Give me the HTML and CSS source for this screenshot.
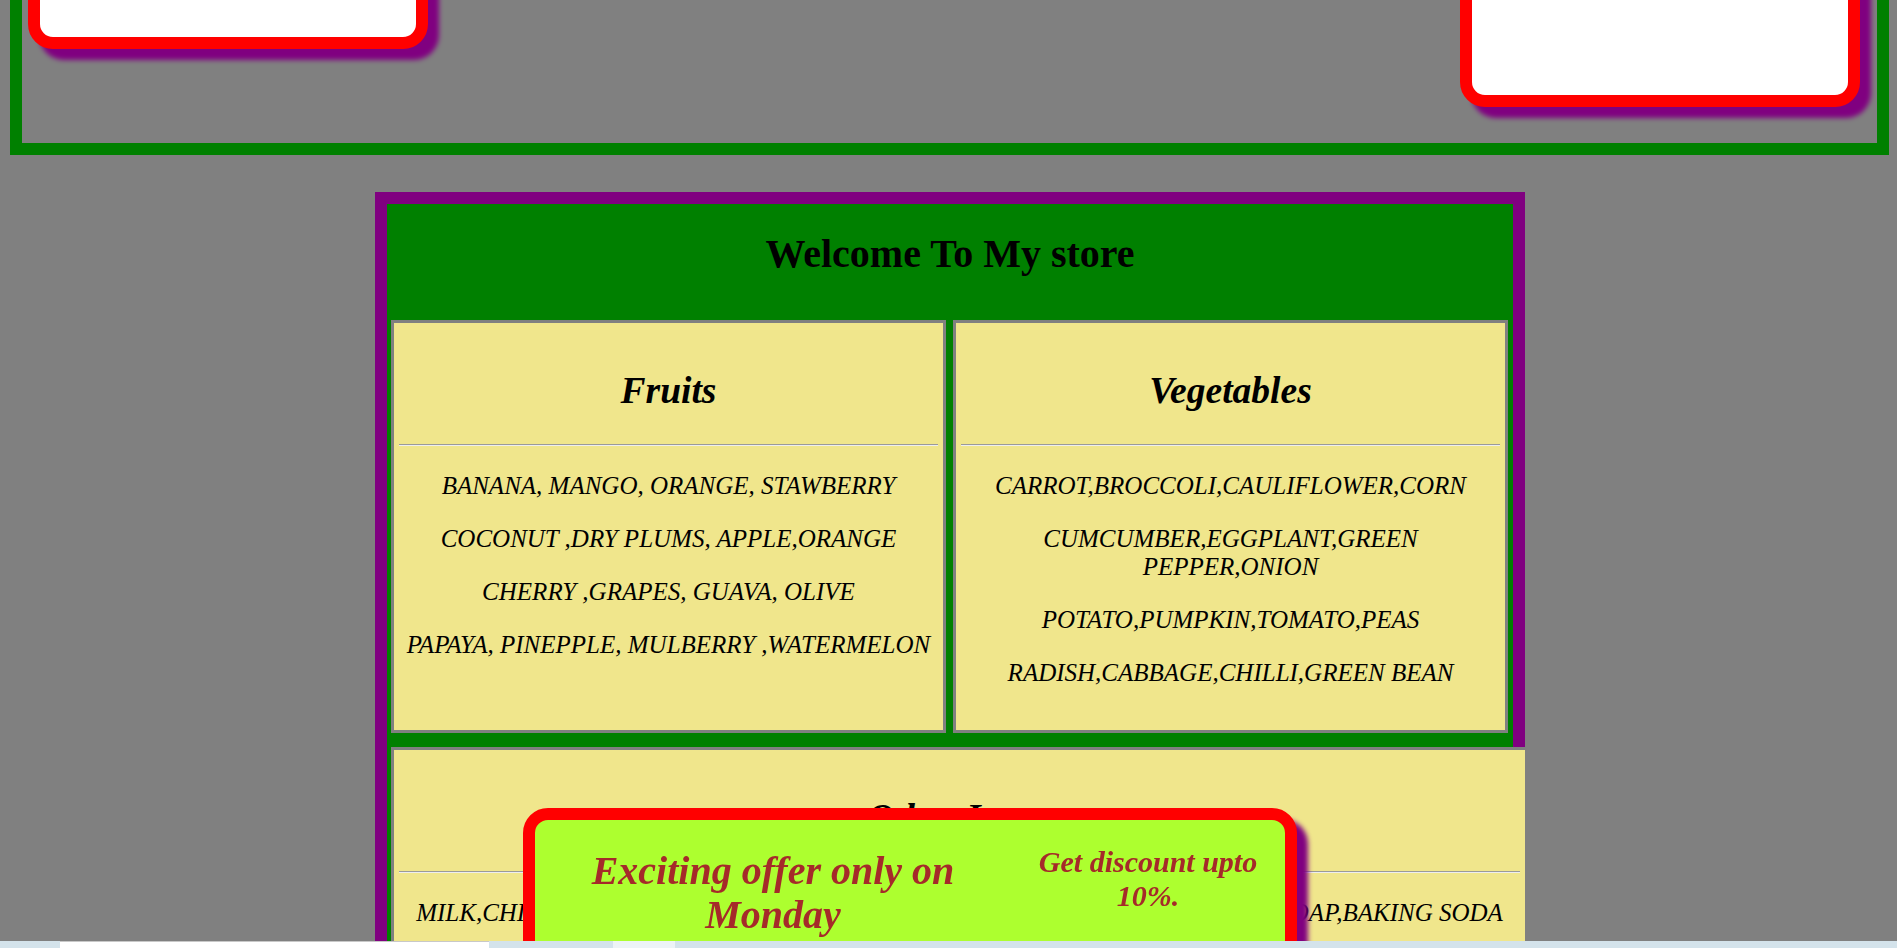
FILE: index.html
```html
<!DOCTYPE html>
<html lang="en">
<head>
<meta charset="utf-8">
<title>My store</title>
<link rel="stylesheet" href="styles.css">
</head>
<body>
<header class="top-banner">
  <div class="promo-card promo-left"></div>
  <div class="promo-card promo-right"></div>
</header>

<main class="store">
  <h1 class="store-title">Welcome To My store</h1>
  <div class="category-row">
    <section class="category">
      <h2 class="category-title">Fruits</h2>
      <hr class="divider">
      <p>BANANA, MANGO, ORANGE, STAWBERRY</p>
      <p>COCONUT ,DRY PLUMS, APPLE,ORANGE</p>
      <p>CHERRY ,GRAPES, GUAVA, OLIVE</p>
      <p>PAPAYA, PINEPPLE, MULBERRY ,WATERMELON</p>
    </section>
    <section class="category">
      <h2 class="category-title">Vegetables</h2>
      <hr class="divider">
      <p>CARROT,BROCCOLI,CAULIFLOWER,CORN</p>
      <p>CUMCUMBER,EGGPLANT,GREEN PEPPER,ONION</p>
      <p>POTATO,PUMPKIN,TOMATO,PEAS</p>
      <p>RADISH,CABBAGE,CHILLI,GREEN BEAN</p>
    </section>
  </div>
  <section class="category category-wide">
    <h2 class="category-title">Other Items</h2>
    <hr class="divider">
    <p>MILK,CHIPS,BREAD,BUTTER,CHEESE,EGGS,SUGAR,SALT,RICE,FLOUR,GHEE,SOAP,BAKING SODA</p>
  </section>
</main>

<aside class="offer">
  <div class="offer-main"><h2 class="offer-headline">Exciting offer only on Monday</h2></div>
  <div class="offer-side"><h3 class="offer-note">Get discount upto 10%.</h3></div>
</aside>

<div class="taskbar">
  <div class="taskbar-search"></div>
  <div class="taskbar-item"></div>
</div>
</body>
</html>
```

FILE: styles.css
```css
html {
  overflow: hidden;
}

body {
  margin: 0;
  background: #808080;
  color: #000;
  font-family: "Liberation Serif", "Times New Roman", serif;
}

/* top banner (scrolled partly out of view) */
.top-banner {
  margin: -120px 8px 0 10px;
  height: 243px;
  padding: 8px 17px 0 6px;
  border: 12px solid #008000;
  display: flex;
  justify-content: space-between;
  align-items: flex-start;
}

.promo-card {
  width: 400px;
  box-sizing: border-box;
  background: #fff;
  border: 12px solid #ff0000;
  border-radius: 25px;
  box-shadow: 11px 11px 5px #800080;
}

.promo-left {
  height: 149px;
}

.promo-right {
  height: 207px;
}

/* store */
.store {
  width: 1126px;
  margin: 37px 0 0 375px;
  border: 12px solid #800080;
  background: #008000;
}

.store-title {
  margin: 28px 0 44px;
  text-align: center;
  font-size: 40px;
  line-height: 44px;
  font-weight: bold;
}

.category-row {
  display: flex;
  gap: 7px;
  padding: 0 5px 0 4px;
}

.category {
  flex: 0 0 555px;
  box-sizing: border-box;
  border: 3px solid #808080;
  background: #f0e68c;
  padding: 0 5px 18px;
  text-align: center;
}

.category-title {
  margin: 46px 0 0;
  font-size: 37.5px;
  line-height: 44px;
  font-style: italic;
  font-weight: bold;
}

.divider {
  margin: 31px 0 26px;
  height: 0;
  border: 0;
  border-top: 1px solid #9a9a9a;
  border-bottom: 1px solid #eeeeee;
}

.category p {
  margin: 25.5px 0;
  font-size: 25px;
  line-height: 27.6px;
  font-style: italic;
}

.category-wide {
  width: 1137px;
  margin: 14px 0 0 4px;
}

/* floating offer */
.offer {
  position: fixed;
  left: 523px;
  top: 808px;
  width: 774px;
  height: 220px;
  box-sizing: border-box;
  border: 12px solid #ff0000;
  border-radius: 25px;
  background: #adff2f;
  box-shadow: 11px 11px 5px #800080;
  display: flex;
  align-items: flex-start;
  color: #a52a2a;
  font-style: italic;
  font-weight: bold;
  text-align: center;
}

.offer-main {
  flex: 0 0 476px;
  padding-top: 29px;
}

.offer-headline {
  margin: 0 auto;
  max-width: 440px;
  font-size: 40px;
  line-height: 44px;
}

.offer-side {
  flex: 1;
  padding-top: 25px;
}

.offer-note {
  margin: 0 auto;
  max-width: 250px;
  font-size: 30px;
  line-height: 34px;
}

/* bottom system strip */
.taskbar {
  position: fixed;
  left: 0;
  right: 0;
  bottom: 0;
  height: 7px;
  background: #d4e3eb;
  display: flex;
}

.taskbar-search {
  margin-left: 60px;
  width: 429px;
  box-sizing: border-box;
  background: #fff;
  border-top: 1px solid #c8c8c8;
}

.taskbar-item {
  margin-left: 124px;
  width: 62px;
  background: #edf3f6;
}
```
